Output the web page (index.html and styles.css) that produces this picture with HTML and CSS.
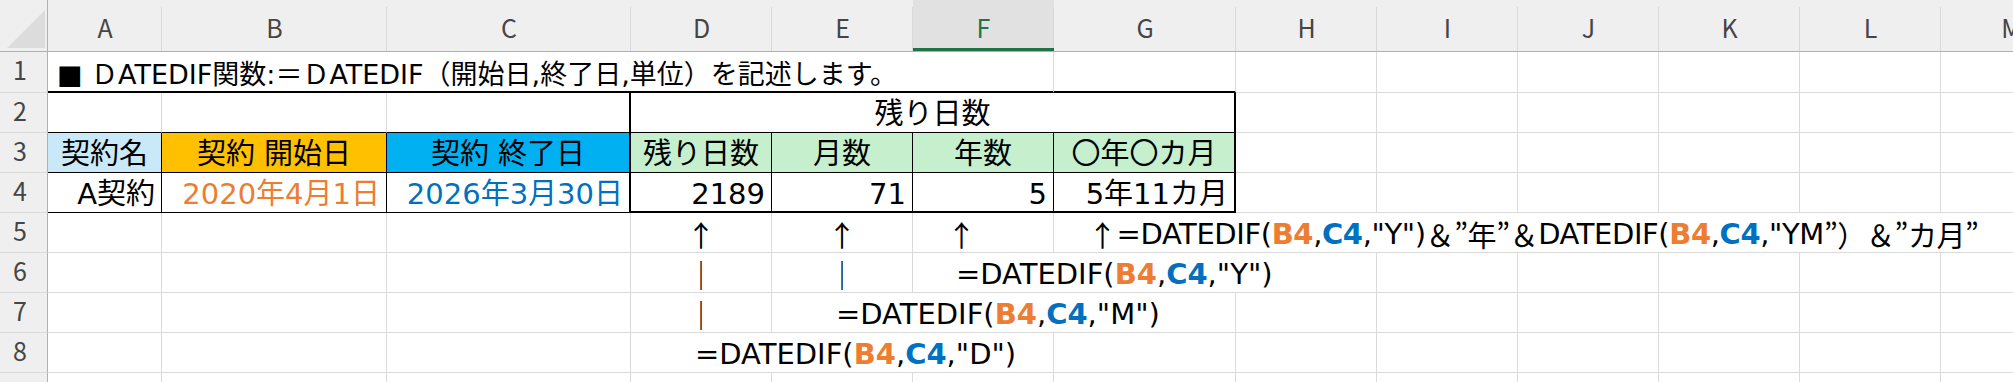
FILE: index.html
```html
<!DOCTYPE html>
<html lang="ja">
<head>
<meta charset="utf-8">
<title>DATEDIF</title>
<link rel="stylesheet" href="styles.css">
</head>
<body>
<div class="sheet">
  <div class="corner"><svg width="38" height="38" viewBox="0 0 38 38"><polygon points="38,0 38,38 0,38" fill="#dcdcdc"/></svg></div>
  <div class="ch">A</div><div class="ch">B</div><div class="ch">C</div><div class="ch">D</div><div class="ch">E</div><div class="ch sel">F</div><div class="ch">G</div><div class="ch">H</div><div class="ch">I</div><div class="ch">J</div><div class="ch">K</div><div class="ch">L</div><div class="ch">M</div>

  <div class="rh">1</div>
  <div class="c s6 bb2 title">■ ＤATEDIF関数:＝ＤATEDIF（開始日,終了日,単位）を記述します。</div>
  <div class="c bb2"></div>
  <div class="c"></div><div class="c"></div><div class="c"></div><div class="c"></div><div class="c"></div><div class="c"></div>

  <div class="rh">2</div>
  <div class="c bb1"></div><div class="c bb1"></div><div class="c bb1 br2"></div>
  <div class="c s4 bb1 br2 ctr">残り日数</div>
  <div class="c"></div><div class="c"></div><div class="c"></div><div class="c"></div><div class="c"></div><div class="c"></div>

  <div class="rh">3</div>
  <div class="c ctr fa br1 bb1">契約名</div>
  <div class="c ctr fb br1 bb1">契約 開始日</div>
  <div class="c ctr fc br2 bb1">契約 終了日</div>
  <div class="c ctr fg br1 bb1">残り日数</div>
  <div class="c ctr fg br1 bb1">月数</div>
  <div class="c ctr fg br1 bb1">年数</div>
  <div class="c ctr fg br2 bb1">〇年〇カ月</div>
  <div class="c"></div><div class="c"></div><div class="c"></div><div class="c"></div><div class="c"></div><div class="c"></div>

  <div class="rh">4</div>
  <div class="c rt br1 bb1">A契約</div>
  <div class="c rt br1 bb1 or">2020年4月1日</div>
  <div class="c rt br2 bb1 bl">2026年3月30日</div>
  <div class="c rt br1 bb2">2189</div>
  <div class="c rt br1 bb2">71</div>
  <div class="c rt br1 bb2">5</div>
  <div class="c rt br2 bb2">5年11カ月</div>
  <div class="c"></div><div class="c"></div><div class="c"></div><div class="c"></div><div class="c"></div><div class="c"></div>

  <div class="rh">5</div>
  <div class="c"></div><div class="c"></div><div class="c"></div>
  <div class="c ctr"><span class="j">↑</span></div>
  <div class="c ctr"><span class="j">↑</span></div>
  <div class="c ind34"><span class="j">↑</span></div>
  <div class="c s7 ind34 tight"><span class="j">↑</span>=DATEDIF(<b class="or">B4</b>,<b class="bl">C4</b>,"Y")<span class="j">＆”年”＆</span>DATEDIF(<b class="or">B4</b>,<b class="bl">C4</b>,"YM<span class="j">”）＆”カ月”</span></div>

  <div class="rh">6</div>
  <div class="c"></div><div class="c"></div><div class="c"></div>
  <div class="c ctr"><span class="j">｜</span></div>
  <div class="c ctr"><span class="j">｜</span></div>
  <div class="c s3 ind43">=DATEDIF(<b class="or">B4</b>,<b class="bl">C4</b>,"Y")</div>
  <div class="c"></div><div class="c"></div><div class="c"></div><div class="c"></div><div class="c"></div>

  <div class="rh">7</div>
  <div class="c"></div><div class="c"></div><div class="c"></div>
  <div class="c ctr"><span class="j">｜</span></div>
  <div class="c s3 ind64">=DATEDIF(<b class="or">B4</b>,<b class="bl">C4</b>,"M")</div>
  <div class="c"></div><div class="c"></div><div class="c"></div><div class="c"></div><div class="c"></div><div class="c"></div>

  <div class="rh">8</div>
  <div class="c"></div><div class="c"></div><div class="c"></div>
  <div class="c s3 ind64">=DATEDIF(<b class="or">B4</b>,<b class="bl">C4</b>,"D")</div>
  <div class="c"></div><div class="c"></div><div class="c"></div><div class="c"></div><div class="c"></div><div class="c"></div><div class="c"></div>

  <div class="rh">9</div>
  <div class="c"></div><div class="c"></div><div class="c"></div><div class="c"></div><div class="c"></div><div class="c"></div><div class="c"></div><div class="c"></div><div class="c"></div><div class="c"></div><div class="c"></div><div class="c"></div><div class="c"></div>
</div>
</body>
</html>
```

FILE: styles.css
```css
* {
  box-sizing: border-box;
  margin: 0;
  padding: 0;
}

html, body {
  width: 2013px;
  height: 382px;
  overflow: hidden;
  background: #ffffff;
}

.sheet {
  display: grid;
  grid-template-columns: 48px 114px 225px 244px 141px 141px 141px 182px 141px 141px 141px 141px 141px 141px;
  grid-template-rows: 52px 41px repeat(8, 40px);
  width: 2082px;
  font-family: "DejaVu Sans", "Noto Sans CJK JP", sans-serif;
  font-size: 29px;
  color: #000;
  background: #fff;
}

.corner {
  background: #efefef;
  border-right: 1px solid #b0b0b0;
  border-bottom: 1px solid #b0b0b0;
  padding: 10px 0 0 7px;
}

.corner svg {
  display: block;
}

.ch {
  background-color: #efefef;
  background-image: linear-gradient(#d9d9d9, #d9d9d9);
  background-size: 1px 44px;
  background-position: right bottom;
  background-repeat: no-repeat;
  border-bottom: 1px solid #b0b0b0;
  display: flex;
  align-items: center;
  justify-content: center;
  padding-top: 4px;
  font-family: "Noto Sans CJK JP", sans-serif;
  font-size: 25px;
  line-height: 1;
  color: #454545;
}

.ch.sel {
  background-color: #e1e1e1;
  box-shadow: inset 0 -3px 0 #217346;
  color: #217346;
}

.rh {
  background: #efefef;
  border-right: 1px solid #b0b0b0;
  border-bottom: 1px solid #dadada;
  display: flex;
  align-items: center;
  justify-content: center;
  padding-right: 7px;
  padding-bottom: 5px;
  font-family: "Noto Sans CJK JP", sans-serif;
  font-size: 25px;
  line-height: 1;
  color: #454545;
}

.c {
  border-right: 1px solid #dadada;
  border-bottom: 1px solid #dadada;
  display: flex;
  align-items: center;
  padding-top: 4px;
  white-space: nowrap;
  line-height: 1;
  min-width: 0;
}

.s3 { grid-column: span 3; }
.s4 { grid-column: span 4; }
.s6 { grid-column: span 6; }
.s7 { grid-column: span 7; }

.ctr { justify-content: center; }
.rt { justify-content: flex-end; padding-right: 6px; }

.title {
  padding-left: 9px;
  font-size: 27px;
  padding-top: 5px;
}

.tight { letter-spacing: -0.4px; }

.ind34 { padding-left: 34px; }
.ind43 { padding-left: 43px; }
.ind64 { padding-left: 64px; }

.bb1 { border-bottom: 1px solid #000; }
.bb2 { border-bottom: 2px solid #000; }
.br1 { border-right: 1px solid #000; }
.br2 { border-right: 2px solid #000; }

.fa { background: #c9e9f8; }
.fb { background: #ffc000; }
.fc { background: #00b0f0; }
.fg { background: #c6efce; }

.or { color: #ed7d31; }
.bl { color: #0070c0; }

b { font-weight: bold; }

.j {
  font-family: "Noto Sans CJK JP", sans-serif;
}
```
